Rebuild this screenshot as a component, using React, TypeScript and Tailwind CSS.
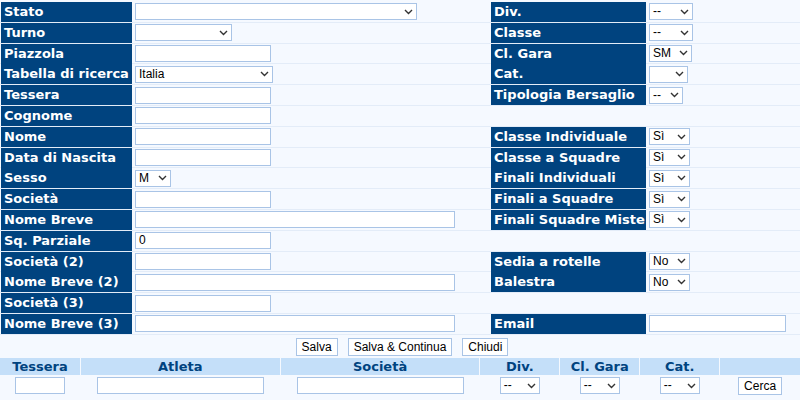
import React from "react";

const L = "bg-[#00437f] text-white font-bold text-[13px] leading-[20px] px-[3px] h-[20px] whitespace-nowrap overflow-hidden";
const inp = "h-[17px] border border-[#a9c4e6] bg-white text-[12px] px-[3px] outline-none";
function Sel({ w, v }: { w: number; v?: string }) {
  return (
    <div className={inp + " flex items-center justify-between bg-white"} style={{ width: w }}>
      <span className="leading-[15px]">{v || ""}</span>
      <svg width="9" height="6" viewBox="0 0 9 6"><path d="M1 1l3.5 3.5L8 1" stroke="#333" strokeWidth="1.4" fill="none" /></svg>
    </div>
  );
}
function Inp({ w, v }: { w: number; v?: string }) {
  return <div className={inp + " leading-[15px]"} style={{ width: w }}>{v || ""}</div>;
}

type Cell = [string, React.ReactNode] | null;
const rows: [Cell, Cell][] = [
  [["Stato", <Sel w={282} />], ["Div.", <Sel w={44} v="--" />]],
  [["Turno", <Sel w={97} />], ["Classe", <Sel w={44} v="--" />]],
  [["Piazzola", <Inp w={136} />], ["Cl. Gara", <Sel w={43} v="SM" />]],
  [["Tabella di ricerca", <Sel w={138} v="Italia" />], ["Cat.", <Sel w={39} />]],
  [["Tessera", <Inp w={136} />], ["Tipologia Bersaglio", <Sel w={34} v="--" />]],
  [["Cognome", <Inp w={136} />], null],
  [["Nome", <Inp w={136} />], ["Classe Individuale", <Sel w={41} v="Sì" />]],
  [["Data di Nascita", <Inp w={136} />], ["Classe a Squadre", <Sel w={41} v="Sì" />]],
  [["Sesso", <Sel w={36} v="M" />], ["Finali Individuali", <Sel w={41} v="Sì" />]],
  [["Società", <Inp w={136} />], ["Finali a Squadre", <Sel w={41} v="Sì" />]],
  [["Nome Breve", <Inp w={320} />], ["Finali Squadre Miste", <Sel w={41} v="Sì" />]],
  [["Sq. Parziale", <Inp w={136} v="0" />], null],
  [["Società (2)", <Inp w={136} />], ["Sedia a rotelle", <Sel w={41} v="No" />]],
  [["Nome Breve (2)", <Inp w={320} />], ["Balestra", <Sel w={41} v="No" />]],
  [["Società (3)", <Inp w={136} />], null],
  [["Nome Breve (3)", <Inp w={320} />], ["Email", <Inp w={137} />]],
];

const btn = "h-[18px] px-[5px] border border-[#a9c4e6] bg-white text-[12px] leading-[16px]";

export default function App() {
  return (
    <div className="w-[800px] h-[400px] bg-[#f5f9ff] text-black pt-[2px]" style={{ fontFamily: "'DejaVu Sans', Verdana, sans-serif" }}>
      {rows.map((r, i) => (
        <div key={i} className="flex h-[20.8px] border-b border-[#e3ecf8]">
          <div className={L + " w-[131px] ml-[1px]"}>{r[0]![0]}</div>
          <div className="w-[357px] flex items-center pl-[3px]" style={{ fontFamily: "'Liberation Sans', Arial, sans-serif" }}>{r[0]![1]}</div>
          {r[1] ? <div className={L + " w-[155px] ml-[2px]"}>{r[1][0]}</div> : <div className="w-[155px] ml-[2px]" />}
          <div className="flex-1 flex items-center pl-[3px]" style={{ fontFamily: "'Liberation Sans', Arial, sans-serif" }}>{r[1] ? r[1][1] : null}</div>
        </div>
      ))}
      <div className="flex justify-center items-center gap-[10px] h-[20px] mt-[2px] pl-[4px]" style={{ fontFamily: "'Liberation Sans', Arial, sans-serif" }}>
        <div className={btn}>Salva</div>
        <div className={btn}>Salva &amp; Continua</div>
        <div className={btn}>Chiudi</div>
      </div>
      <div className="flex gap-[1px] h-[17px] mt-[1px]">
        {[["Tessera", 80], ["Atleta", 199], ["Società", 199], ["Div.", 79], ["Cl. Gara", 79], ["Cat.", 79], ["", 80]].map(([t, w], i) => (
          <div key={i} className="bg-[#c4dff9] text-[#00437f] font-bold text-[13px] leading-[17px] text-center" style={{ width: w as number }}>{t}</div>
        ))}
      </div>
      <div className="flex gap-[1px] h-[22px] items-center" style={{ fontFamily: "'Liberation Sans', Arial, sans-serif" }}>
        <div className="w-[80px] flex justify-center"><Inp w={50} /></div>
        <div className="w-[199px] flex justify-center"><Inp w={167} /></div>
        <div className="w-[199px] flex justify-center"><Inp w={167} /></div>
        <div className="w-[79px] flex justify-center"><Sel w={40} v="--" /></div>
        <div className="w-[79px] flex justify-center"><Sel w={40} v="--" /></div>
        <div className="w-[79px] flex justify-center"><Sel w={40} v="--" /></div>
        <div className="w-[80px] flex justify-center"><div className={btn}>Cerca</div></div>
      </div>
    </div>
  );
}
